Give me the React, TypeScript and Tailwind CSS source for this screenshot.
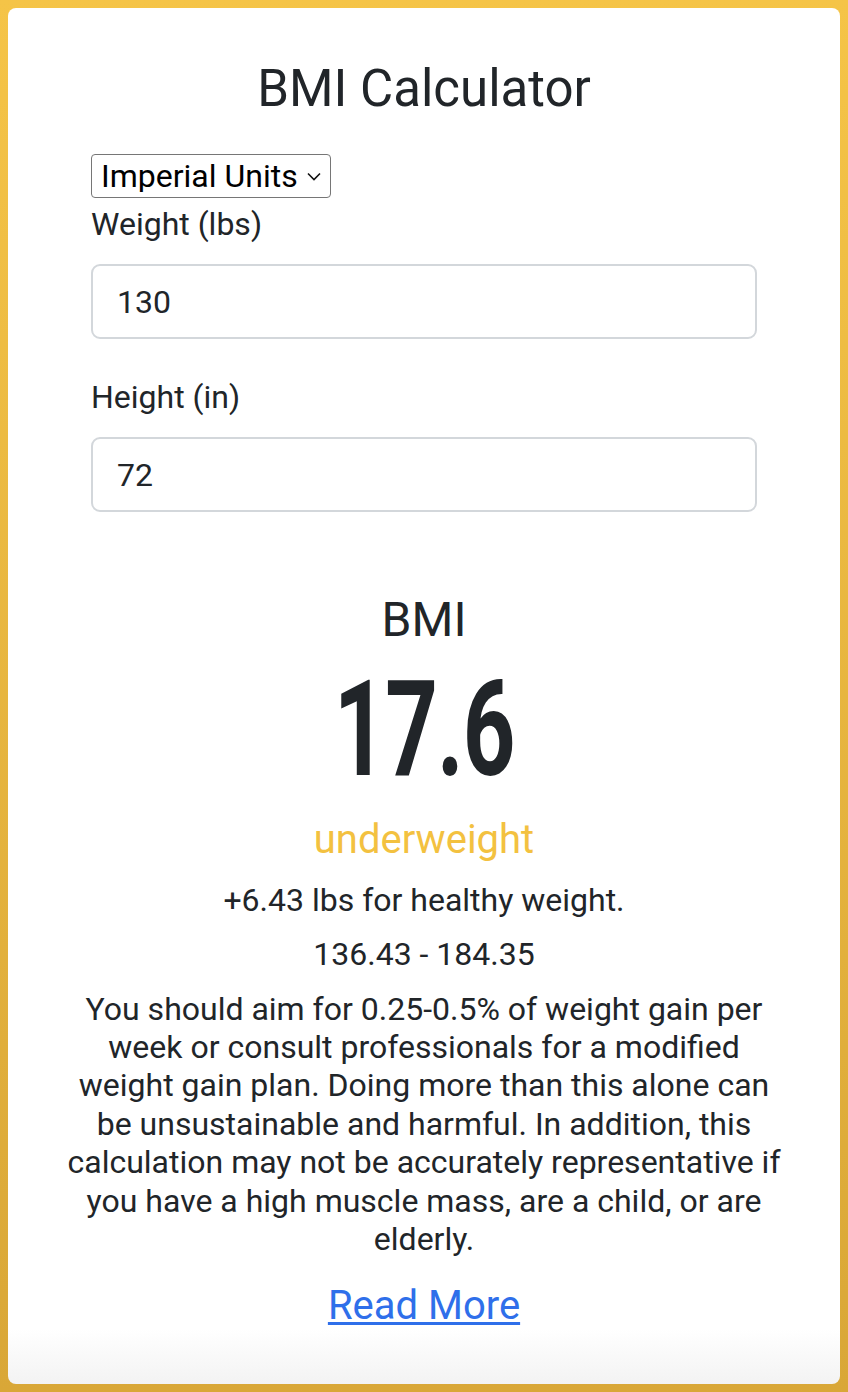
import { useState } from "react";

const font = { fontFamily: "Roboto, 'Liberation Sans', sans-serif" };

function Field({
  label,
  value,
  onChange,
  className = "",
}: {
  label: string;
  value: string;
  onChange: (v: string) => void;
  className?: string;
}) {
  return (
    <div className={className}>
      <label className="block text-[32px] leading-[48px] text-[#212529]">{label}</label>
      <input
        type="text"
        value={value}
        onChange={(e) => onChange(e.target.value)}
        className="mt-4 block h-[75px] w-full rounded-[9px] border-2 border-[#d3d7db] bg-white px-6 text-[32px] text-[#212529] outline-none"
      />
    </div>
  );
}

export default function App() {
  const [units, setUnits] = useState("imperial");
  const [weight, setWeight] = useState("130");
  const [height, setHeight] = useState("72");

  return (
    <div
      style={font}
      className="h-screen w-full bg-[linear-gradient(to_bottom,#f5c447,#d9a737)] p-2"
    >
      <div className="flex h-full flex-col items-center rounded-lg bg-[linear-gradient(to_bottom,#ffffff_96%,#f3f3f3)] px-14 pt-[50px] text-[#212529]">
        <h1 className="text-center text-[51px] leading-[1.2] font-normal">BMI Calculator</h1>

        <div className="mt-[35px] w-[666px]">
          <div className="relative inline-block">
            <select
              value={units}
              onChange={(e) => setUnits(e.target.value)}
              style={font}
              className="block h-[44px] w-[240px] appearance-none rounded-[4px] border border-[#767676] bg-white pl-[9px] text-[32px] leading-none text-black outline-none"
            >
              <option value="imperial">Imperial Units</option>
              <option value="metric">Metric Units</option>
            </select>
            <svg
              className="pointer-events-none absolute top-[18px] right-[10px]"
              width="14"
              height="9"
              viewBox="0 0 14 9"
              fill="none"
              stroke="#111"
              strokeWidth="1.6"
            >
              <path d="M1 1.5l6 6 6-6" />
            </svg>
          </div>

          <Field label="Weight (lbs)" value={weight} onChange={setWeight} className="mt-[2px]" />
          <Field label="Height (in)" value={height} onChange={setHeight} className="mt-[34px]" />
        </div>

        <div className="mt-[79px] flex w-full flex-col items-center text-center">
          <div className="text-[48px] leading-[1.2]">BMI</div>
          <div className="mt-[15px] h-[131px] overflow-visible">
            <span className="inline-block origin-center scale-x-[0.69] text-[133px] leading-[131px] font-bold tracking-[-0.01em] text-[#212529]">
              17.6
            </span>
          </div>
          <div className="mt-[21px] text-[40px] leading-[1.2] text-[#f3c140]">underweight</div>
          <p className="mt-[17px] text-[32px] leading-[1.2]">+6.43 lbs for healthy weight.</p>
          <p className="mt-4 text-[32px] leading-[1.2]">136.43 - 184.35</p>
          <p className="mt-4 text-[32px] leading-[1.2]">
            You should aim for 0.25-0.5% of weight gain per week or consult professionals for a
            modified weight gain plan. Doing more than this alone can be unsustainable and harmful.
            In addition, this calculation may not be accurately representative if you have a high
            muscle mass, are a child, or are elderly.
          </p>
          <a
            href="#"
            className="mt-[18px] text-[40px] leading-[1.5] text-[#2f6fea] underline decoration-[3px] underline-offset-[3px]"
          >
            Read More
          </a>
        </div>
      </div>
    </div>
  );
}
